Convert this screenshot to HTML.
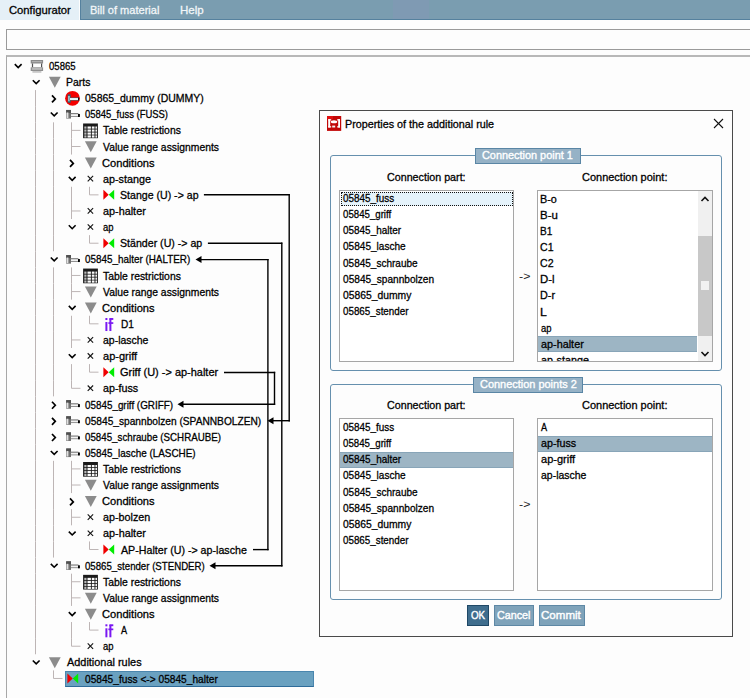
<!DOCTYPE html>
<html><head><meta charset="utf-8"><style>
html,body{margin:0;padding:0;width:750px;height:698px;overflow:hidden;background:#fdfdfd}
.t{position:absolute;white-space:pre;font-family:"Liberation Sans",sans-serif;font-size:11.5px;line-height:16px;transform-origin:0 0;-webkit-text-stroke-width:0.3px}
</style></head><body>
<div style="position:absolute;left:0;top:0;width:79px;height:20px;background:#e5f0f7"></div>
<div style="position:absolute;left:80px;top:0;width:670px;height:19px;background:#7a9db0;border-left:1px solid #55819e;border-bottom:1px solid #55819e"></div>
<div style="position:absolute;left:393px;top:0;width:36px;height:19px;background:#7f9ab3"></div>
<div class="t" style="left:8.52px;top:2px;color:#000;transform:scaleX(0.9774);">Configurator</div>
<div class="t" style="left:90.34px;top:2px;color:#f2f6f8;transform:scaleX(0.9606);">Bill of material</div>
<div class="t" style="left:180.00px;top:2px;color:#f2f6f8;transform:scaleX(1.0000);">Help</div>
<div style="position:absolute;left:6px;top:29px;width:760px;height:19px;border:1px solid #9a9a9a"></div>
<div style="position:absolute;left:6px;top:55px;width:760px;height:700px;border-left:1px solid #a8a8a8;border-top:2px solid #b8b8b8"></div>
<div class="t" style="left:49.40px;top:58px;color:#000;transform:scaleX(0.8313);">05865</div>
<div class="t" style="left:66.49px;top:74px;color:#000;transform:scaleX(0.9080);">Parts</div>
<div class="t" style="left:85.40px;top:90px;color:#000;transform:scaleX(0.9108);">05865_dummy (DUMMY)</div>
<div class="t" style="left:85.40px;top:106px;color:#000;transform:scaleX(0.8218);">05845_fuss (FUSS)</div>
<div class="t" style="left:103.40px;top:122px;color:#000;transform:scaleX(0.9023);">Table restrictions</div>
<div class="t" style="left:103.40px;top:139px;color:#000;transform:scaleX(0.8992);">Value range assignments</div>
<div class="t" style="left:102.43px;top:155px;color:#000;transform:scaleX(0.9679);">Conditions</div>
<div class="t" style="left:103.40px;top:171px;color:#000;transform:scaleX(0.9377);">ap-stange</div>
<div class="t" style="left:120.48px;top:187px;color:#000;transform:scaleX(0.9202);">Stange (U) -&gt; ap</div>
<div class="t" style="left:103.40px;top:203px;color:#000;transform:scaleX(0.9422);">ap-halter</div>
<div class="t" style="left:103.40px;top:219px;color:#000;transform:scaleX(0.8231);">ap</div>
<div class="t" style="left:120.48px;top:235px;color:#000;transform:scaleX(0.9227);">Ständer (U) -&gt; ap</div>
<div class="t" style="left:85.40px;top:251px;color:#000;transform:scaleX(0.8590);">05845_halter (HALTER)</div>
<div class="t" style="left:103.40px;top:268px;color:#000;transform:scaleX(0.9023);">Table restrictions</div>
<div class="t" style="left:103.40px;top:284px;color:#000;transform:scaleX(0.8992);">Value range assignments</div>
<div class="t" style="left:102.43px;top:300px;color:#000;transform:scaleX(0.9679);">Conditions</div>
<div class="t" style="left:120.52px;top:316px;color:#000;transform:scaleX(0.8769);">D1</div>
<div class="t" style="left:103.40px;top:332px;color:#000;transform:scaleX(0.9100);">ap-lasche</div>
<div class="t" style="left:103.40px;top:348px;color:#000;transform:scaleX(0.9583);">ap-griff</div>
<div class="t" style="left:120.45px;top:364px;color:#000;transform:scaleX(0.9529);">Griff (U) -&gt; ap-halter</div>
<div class="t" style="left:103.40px;top:380px;color:#000;transform:scaleX(0.9324);">ap-fuss</div>
<div class="t" style="left:85.40px;top:397px;color:#000;transform:scaleX(0.8569);">05845_griff (GRIFF)</div>
<div class="t" style="left:85.40px;top:413px;color:#000;transform:scaleX(0.8844);">05845_spannbolzen (SPANNBOLZEN)</div>
<div class="t" style="left:85.40px;top:429px;color:#000;transform:scaleX(0.8475);">05845_schraube (SCHRAUBE)</div>
<div class="t" style="left:85.40px;top:445px;color:#000;transform:scaleX(0.8609);">05845_lasche (LASCHE)</div>
<div class="t" style="left:103.40px;top:461px;color:#000;transform:scaleX(0.9023);">Table restrictions</div>
<div class="t" style="left:103.40px;top:477px;color:#000;transform:scaleX(0.8992);">Value range assignments</div>
<div class="t" style="left:102.43px;top:493px;color:#000;transform:scaleX(0.9679);">Conditions</div>
<div class="t" style="left:103.40px;top:509px;color:#000;transform:scaleX(0.9360);">ap-bolzen</div>
<div class="t" style="left:103.40px;top:525px;color:#000;transform:scaleX(0.9422);">ap-halter</div>
<div class="t" style="left:121.40px;top:542px;color:#000;transform:scaleX(0.9265);">AP-Halter (U) -&gt; ap-lasche</div>
<div class="t" style="left:85.40px;top:558px;color:#000;transform:scaleX(0.8401);">05865_stender (STENDER)</div>
<div class="t" style="left:103.40px;top:574px;color:#000;transform:scaleX(0.9023);">Table restrictions</div>
<div class="t" style="left:103.40px;top:590px;color:#000;transform:scaleX(0.8992);">Value range assignments</div>
<div class="t" style="left:102.43px;top:606px;color:#000;transform:scaleX(0.9679);">Conditions</div>
<div class="t" style="left:121.40px;top:622px;color:#000;transform:scaleX(0.7978);">A</div>
<div class="t" style="left:103.40px;top:638px;color:#000;transform:scaleX(0.8231);">ap</div>
<div class="t" style="left:67.40px;top:654px;color:#000;transform:scaleX(0.9487);">Additional rules</div>
<div style="position:absolute;left:65px;top:671px;width:247px;height:14px;background:#6aa1c0;border:1px solid #4a86ae;border-bottom-color:#2f6c9a"></div>
<div class="t" style="left:85.40px;top:671px;color:#000;transform:scaleX(0.8840);">05845_fuss &lt;-&gt; 05845_halter</div>
<svg style="position:absolute;left:0;top:0" width="750" height="698" viewBox="0 0 750 698"><line x1="35.5" y1="90.08" x2="35.5" y2="106.20" stroke="#bdb5b5" stroke-width="1"/><line x1="35.5" y1="106.20" x2="35.5" y2="122.32" stroke="#bdb5b5" stroke-width="1"/><line x1="35.5" y1="122.32" x2="35.5" y2="138.44" stroke="#bdb5b5" stroke-width="1"/><line x1="53.5" y1="122.32" x2="53.5" y2="138.44" stroke="#bdb5b5" stroke-width="1"/><line x1="71.5" y1="122.32" x2="71.5" y2="138.44" stroke="#bdb5b5" stroke-width="1"/><line x1="71.5" y1="130.38" x2="80.5" y2="130.38" stroke="#bdb5b5" stroke-width="1"/><line x1="35.5" y1="138.44" x2="35.5" y2="154.56" stroke="#bdb5b5" stroke-width="1"/><line x1="53.5" y1="138.44" x2="53.5" y2="154.56" stroke="#bdb5b5" stroke-width="1"/><line x1="71.5" y1="138.44" x2="71.5" y2="154.56" stroke="#bdb5b5" stroke-width="1"/><line x1="71.5" y1="146.50" x2="80.5" y2="146.50" stroke="#bdb5b5" stroke-width="1"/><line x1="35.5" y1="154.56" x2="35.5" y2="170.68" stroke="#bdb5b5" stroke-width="1"/><line x1="53.5" y1="154.56" x2="53.5" y2="170.68" stroke="#bdb5b5" stroke-width="1"/><line x1="35.5" y1="170.68" x2="35.5" y2="186.80" stroke="#bdb5b5" stroke-width="1"/><line x1="53.5" y1="170.68" x2="53.5" y2="186.80" stroke="#bdb5b5" stroke-width="1"/><line x1="35.5" y1="186.80" x2="35.5" y2="202.92" stroke="#bdb5b5" stroke-width="1"/><line x1="53.5" y1="186.80" x2="53.5" y2="202.92" stroke="#bdb5b5" stroke-width="1"/><line x1="71.5" y1="186.80" x2="71.5" y2="202.92" stroke="#bdb5b5" stroke-width="1"/><line x1="89.5" y1="186.80" x2="89.5" y2="194.86" stroke="#bdb5b5" stroke-width="1"/><line x1="89.5" y1="194.86" x2="98.5" y2="194.86" stroke="#bdb5b5" stroke-width="1"/><line x1="35.5" y1="202.92" x2="35.5" y2="219.04" stroke="#bdb5b5" stroke-width="1"/><line x1="53.5" y1="202.92" x2="53.5" y2="219.04" stroke="#bdb5b5" stroke-width="1"/><line x1="71.5" y1="202.92" x2="71.5" y2="219.04" stroke="#bdb5b5" stroke-width="1"/><line x1="71.5" y1="210.98" x2="80.5" y2="210.98" stroke="#bdb5b5" stroke-width="1"/><line x1="35.5" y1="219.04" x2="35.5" y2="235.16" stroke="#bdb5b5" stroke-width="1"/><line x1="53.5" y1="219.04" x2="53.5" y2="235.16" stroke="#bdb5b5" stroke-width="1"/><line x1="35.5" y1="235.16" x2="35.5" y2="251.28" stroke="#bdb5b5" stroke-width="1"/><line x1="53.5" y1="235.16" x2="53.5" y2="251.28" stroke="#bdb5b5" stroke-width="1"/><line x1="89.5" y1="235.16" x2="89.5" y2="243.22" stroke="#bdb5b5" stroke-width="1"/><line x1="89.5" y1="243.22" x2="98.5" y2="243.22" stroke="#bdb5b5" stroke-width="1"/><line x1="35.5" y1="251.28" x2="35.5" y2="267.40" stroke="#bdb5b5" stroke-width="1"/><line x1="35.5" y1="267.40" x2="35.5" y2="283.52" stroke="#bdb5b5" stroke-width="1"/><line x1="53.5" y1="267.40" x2="53.5" y2="283.52" stroke="#bdb5b5" stroke-width="1"/><line x1="71.5" y1="267.40" x2="71.5" y2="283.52" stroke="#bdb5b5" stroke-width="1"/><line x1="71.5" y1="275.46" x2="80.5" y2="275.46" stroke="#bdb5b5" stroke-width="1"/><line x1="35.5" y1="283.52" x2="35.5" y2="299.64" stroke="#bdb5b5" stroke-width="1"/><line x1="53.5" y1="283.52" x2="53.5" y2="299.64" stroke="#bdb5b5" stroke-width="1"/><line x1="71.5" y1="283.52" x2="71.5" y2="299.64" stroke="#bdb5b5" stroke-width="1"/><line x1="71.5" y1="291.58" x2="80.5" y2="291.58" stroke="#bdb5b5" stroke-width="1"/><line x1="35.5" y1="299.64" x2="35.5" y2="315.76" stroke="#bdb5b5" stroke-width="1"/><line x1="53.5" y1="299.64" x2="53.5" y2="315.76" stroke="#bdb5b5" stroke-width="1"/><line x1="35.5" y1="315.76" x2="35.5" y2="331.88" stroke="#bdb5b5" stroke-width="1"/><line x1="53.5" y1="315.76" x2="53.5" y2="331.88" stroke="#bdb5b5" stroke-width="1"/><line x1="71.5" y1="315.76" x2="71.5" y2="331.88" stroke="#bdb5b5" stroke-width="1"/><line x1="89.5" y1="315.76" x2="89.5" y2="323.82" stroke="#bdb5b5" stroke-width="1"/><line x1="89.5" y1="323.82" x2="98.5" y2="323.82" stroke="#bdb5b5" stroke-width="1"/><line x1="35.5" y1="331.88" x2="35.5" y2="348.00" stroke="#bdb5b5" stroke-width="1"/><line x1="53.5" y1="331.88" x2="53.5" y2="348.00" stroke="#bdb5b5" stroke-width="1"/><line x1="71.5" y1="331.88" x2="71.5" y2="348.00" stroke="#bdb5b5" stroke-width="1"/><line x1="71.5" y1="339.94" x2="80.5" y2="339.94" stroke="#bdb5b5" stroke-width="1"/><line x1="35.5" y1="348.00" x2="35.5" y2="364.12" stroke="#bdb5b5" stroke-width="1"/><line x1="53.5" y1="348.00" x2="53.5" y2="364.12" stroke="#bdb5b5" stroke-width="1"/><line x1="35.5" y1="364.12" x2="35.5" y2="380.24" stroke="#bdb5b5" stroke-width="1"/><line x1="53.5" y1="364.12" x2="53.5" y2="380.24" stroke="#bdb5b5" stroke-width="1"/><line x1="71.5" y1="364.12" x2="71.5" y2="380.24" stroke="#bdb5b5" stroke-width="1"/><line x1="89.5" y1="364.12" x2="89.5" y2="372.18" stroke="#bdb5b5" stroke-width="1"/><line x1="89.5" y1="372.18" x2="98.5" y2="372.18" stroke="#bdb5b5" stroke-width="1"/><line x1="35.5" y1="380.24" x2="35.5" y2="396.36" stroke="#bdb5b5" stroke-width="1"/><line x1="53.5" y1="380.24" x2="53.5" y2="396.36" stroke="#bdb5b5" stroke-width="1"/><line x1="71.5" y1="380.24" x2="71.5" y2="388.30" stroke="#bdb5b5" stroke-width="1"/><line x1="71.5" y1="388.30" x2="80.5" y2="388.30" stroke="#bdb5b5" stroke-width="1"/><line x1="35.5" y1="396.36" x2="35.5" y2="412.48" stroke="#bdb5b5" stroke-width="1"/><line x1="35.5" y1="412.48" x2="35.5" y2="428.60" stroke="#bdb5b5" stroke-width="1"/><line x1="35.5" y1="428.60" x2="35.5" y2="444.72" stroke="#bdb5b5" stroke-width="1"/><line x1="35.5" y1="444.72" x2="35.5" y2="460.84" stroke="#bdb5b5" stroke-width="1"/><line x1="35.5" y1="460.84" x2="35.5" y2="476.96" stroke="#bdb5b5" stroke-width="1"/><line x1="53.5" y1="460.84" x2="53.5" y2="476.96" stroke="#bdb5b5" stroke-width="1"/><line x1="71.5" y1="460.84" x2="71.5" y2="476.96" stroke="#bdb5b5" stroke-width="1"/><line x1="71.5" y1="468.90" x2="80.5" y2="468.90" stroke="#bdb5b5" stroke-width="1"/><line x1="35.5" y1="476.96" x2="35.5" y2="493.08" stroke="#bdb5b5" stroke-width="1"/><line x1="53.5" y1="476.96" x2="53.5" y2="493.08" stroke="#bdb5b5" stroke-width="1"/><line x1="71.5" y1="476.96" x2="71.5" y2="493.08" stroke="#bdb5b5" stroke-width="1"/><line x1="71.5" y1="485.02" x2="80.5" y2="485.02" stroke="#bdb5b5" stroke-width="1"/><line x1="35.5" y1="493.08" x2="35.5" y2="509.20" stroke="#bdb5b5" stroke-width="1"/><line x1="53.5" y1="493.08" x2="53.5" y2="509.20" stroke="#bdb5b5" stroke-width="1"/><line x1="35.5" y1="509.20" x2="35.5" y2="525.32" stroke="#bdb5b5" stroke-width="1"/><line x1="53.5" y1="509.20" x2="53.5" y2="525.32" stroke="#bdb5b5" stroke-width="1"/><line x1="71.5" y1="509.20" x2="71.5" y2="525.32" stroke="#bdb5b5" stroke-width="1"/><line x1="71.5" y1="517.26" x2="80.5" y2="517.26" stroke="#bdb5b5" stroke-width="1"/><line x1="35.5" y1="525.32" x2="35.5" y2="541.44" stroke="#bdb5b5" stroke-width="1"/><line x1="53.5" y1="525.32" x2="53.5" y2="541.44" stroke="#bdb5b5" stroke-width="1"/><line x1="35.5" y1="541.44" x2="35.5" y2="557.56" stroke="#bdb5b5" stroke-width="1"/><line x1="53.5" y1="541.44" x2="53.5" y2="557.56" stroke="#bdb5b5" stroke-width="1"/><line x1="89.5" y1="541.44" x2="89.5" y2="549.50" stroke="#bdb5b5" stroke-width="1"/><line x1="89.5" y1="549.50" x2="98.5" y2="549.50" stroke="#bdb5b5" stroke-width="1"/><line x1="35.5" y1="557.56" x2="35.5" y2="573.68" stroke="#bdb5b5" stroke-width="1"/><line x1="35.5" y1="573.68" x2="35.5" y2="589.80" stroke="#bdb5b5" stroke-width="1"/><line x1="71.5" y1="573.68" x2="71.5" y2="589.80" stroke="#bdb5b5" stroke-width="1"/><line x1="71.5" y1="581.74" x2="80.5" y2="581.74" stroke="#bdb5b5" stroke-width="1"/><line x1="35.5" y1="589.80" x2="35.5" y2="605.92" stroke="#bdb5b5" stroke-width="1"/><line x1="71.5" y1="589.80" x2="71.5" y2="605.92" stroke="#bdb5b5" stroke-width="1"/><line x1="71.5" y1="597.86" x2="80.5" y2="597.86" stroke="#bdb5b5" stroke-width="1"/><line x1="35.5" y1="605.92" x2="35.5" y2="622.04" stroke="#bdb5b5" stroke-width="1"/><line x1="35.5" y1="622.04" x2="35.5" y2="638.16" stroke="#bdb5b5" stroke-width="1"/><line x1="71.5" y1="622.04" x2="71.5" y2="638.16" stroke="#bdb5b5" stroke-width="1"/><line x1="89.5" y1="622.04" x2="89.5" y2="630.10" stroke="#bdb5b5" stroke-width="1"/><line x1="89.5" y1="630.10" x2="98.5" y2="630.10" stroke="#bdb5b5" stroke-width="1"/><line x1="35.5" y1="638.16" x2="35.5" y2="654.28" stroke="#bdb5b5" stroke-width="1"/><line x1="71.5" y1="638.16" x2="71.5" y2="646.22" stroke="#bdb5b5" stroke-width="1"/><line x1="71.5" y1="646.22" x2="80.5" y2="646.22" stroke="#bdb5b5" stroke-width="1"/><line x1="53.5" y1="670.40" x2="53.5" y2="678.46" stroke="#bdb5b5" stroke-width="1"/><line x1="53.5" y1="678.46" x2="62.5" y2="678.46" stroke="#bdb5b5" stroke-width="1"/><polyline points="14.80,64.10 18.20,67.50 21.60,64.10" fill="none" stroke="#000" stroke-width="1.6"/><polyline points="32.80,80.22 36.20,83.62 39.60,80.22" fill="none" stroke="#000" stroke-width="1.6"/><polyline points="52.00,95.44 55.30,98.94 52.00,102.44" fill="none" stroke="#000" stroke-width="1.7"/><polyline points="50.80,112.46 54.20,115.86 57.60,112.46" fill="none" stroke="#000" stroke-width="1.6"/><polyline points="70.00,159.92 73.30,163.42 70.00,166.92" fill="none" stroke="#000" stroke-width="1.7"/><polyline points="68.80,176.94 72.20,180.34 75.60,176.94" fill="none" stroke="#000" stroke-width="1.6"/><polyline points="68.80,225.30 72.20,228.70 75.60,225.30" fill="none" stroke="#000" stroke-width="1.6"/><polyline points="50.80,257.54 54.20,260.94 57.60,257.54" fill="none" stroke="#000" stroke-width="1.6"/><polyline points="68.80,305.90 72.20,309.30 75.60,305.90" fill="none" stroke="#000" stroke-width="1.6"/><polyline points="68.80,354.26 72.20,357.66 75.60,354.26" fill="none" stroke="#000" stroke-width="1.6"/><polyline points="52.00,401.72 55.30,405.22 52.00,408.72" fill="none" stroke="#000" stroke-width="1.7"/><polyline points="52.00,417.84 55.30,421.34 52.00,424.84" fill="none" stroke="#000" stroke-width="1.7"/><polyline points="52.00,433.96 55.30,437.46 52.00,440.96" fill="none" stroke="#000" stroke-width="1.7"/><polyline points="50.80,450.98 54.20,454.38 57.60,450.98" fill="none" stroke="#000" stroke-width="1.6"/><polyline points="70.00,498.44 73.30,501.94 70.00,505.44" fill="none" stroke="#000" stroke-width="1.7"/><polyline points="68.80,531.58 72.20,534.98 75.60,531.58" fill="none" stroke="#000" stroke-width="1.6"/><polyline points="50.80,563.82 54.20,567.22 57.60,563.82" fill="none" stroke="#000" stroke-width="1.6"/><polyline points="68.80,612.18 72.20,615.58 75.60,612.18" fill="none" stroke="#000" stroke-width="1.6"/><polyline points="32.80,660.54 36.20,663.94 39.60,660.54" fill="none" stroke="#000" stroke-width="1.6"/><g transform="translate(30.4,60.00)"><rect x="0.3" y="0" width="12.4" height="3.5" fill="#8a8a8a"/><rect x="1.5" y="1" width="10" height="1.2" fill="#b0b0b0"/><rect x="1.5" y="3.5" width="1.2" height="3.8" fill="#505050"/><rect x="10.6" y="3.5" width="1.2" height="3.8" fill="#505050"/><rect x="0.3" y="7.3" width="12.4" height="3.7" fill="#8f8f8f"/><rect x="1.5" y="8.2" width="10" height="1.5" fill="#c4c4c4"/><rect x="2" y="11" width="9" height="1.8" fill="#c8c8c8"/></g><polygon points="48.9,76.82 60.7,76.82 54.8,87.82" fill="#8c8c8c"/><circle cx="72.50" cy="98.34" r="7.4" fill="#f40000"/><rect x="67.7" y="94.44" width="3" height="8.3" fill="#2c6272"/><rect x="68.30000000000001" y="95.94" width="1.3" height="5.4" fill="#bfe8f0"/><rect x="69.80000000000001" y="97.44" width="9.2" height="3.2" fill="#505a60"/><rect x="70.0" y="98.04" width="8.8" height="2" fill="#e4f6fa"/><rect x="78.0" y="97.54" width="1.2" height="3" fill="#111"/><rect x="66.20" y="109.96" width="4.8" height="8.6" fill="#707070"/><rect x="66.20" y="109.96" width="4.8" height="3" fill="#505050"/><rect x="66.60" y="112.46" width="1.8" height="5.6" fill="#e0e0e0"/><rect x="71.00" y="113.16" width="7.4" height="3.6" fill="#6a6a6a"/><rect x="71.00" y="114.16" width="7" height="1.9" fill="#f2f2f2"/><rect x="78.00" y="113.96" width="1.9" height="3" fill="#000"/><g transform="translate(83.10,123.48)"><rect x="0" y="0" width="14.8" height="14.7" fill="#1a1a1a"/><rect x="1.2" y="3.0" width="2.2" height="2.2" fill="#b8b8b8"/><rect x="4.4" y="3.0" width="3.4" height="2.2" fill="#fafafa"/><rect x="8.7" y="3.0" width="2.7" height="2.2" fill="#fafafa"/><rect x="12.3" y="3.0" width="1.6" height="2.2" fill="#f0f0f0"/><rect x="1.2" y="6.0" width="2.2" height="2.2" fill="#b8b8b8"/><rect x="4.4" y="6.0" width="3.4" height="2.2" fill="#fafafa"/><rect x="8.7" y="6.0" width="2.7" height="2.2" fill="#fafafa"/><rect x="12.3" y="6.0" width="1.6" height="2.2" fill="#f0f0f0"/><rect x="1.2" y="9.0" width="2.2" height="2.2" fill="#b8b8b8"/><rect x="4.4" y="9.0" width="3.4" height="2.2" fill="#fafafa"/><rect x="8.7" y="9.0" width="2.7" height="2.2" fill="#fafafa"/><rect x="12.3" y="9.0" width="1.6" height="2.2" fill="#f0f0f0"/><rect x="1.2" y="11.9" width="2.2" height="2.2" fill="#b8b8b8"/><rect x="4.4" y="11.9" width="3.4" height="2.2" fill="#fafafa"/><rect x="8.7" y="11.9" width="2.7" height="2.2" fill="#fafafa"/><rect x="12.3" y="11.9" width="1.6" height="2.2" fill="#f0f0f0"/></g><polygon points="84.9,141.30 96.7,141.30 90.80000000000001,152.30" fill="#8c8c8c"/><polygon points="84.9,157.42 96.7,157.42 90.80000000000001,168.42" fill="#8c8c8c"/><line x1="87.70" y1="175.94" x2="93.10" y2="181.34" stroke="#111" stroke-width="1.1"/><line x1="87.70" y1="181.34" x2="93.10" y2="175.94" stroke="#111" stroke-width="1.1"/><polygon points="103.4,189.86 108.7,194.86 103.4,199.86" fill="#f00000"/><polygon points="114.2,189.86 108.7,194.86 114.2,199.86" fill="#00ec00"/><line x1="87.70" y1="208.18" x2="93.10" y2="213.58" stroke="#111" stroke-width="1.1"/><line x1="87.70" y1="213.58" x2="93.10" y2="208.18" stroke="#111" stroke-width="1.1"/><line x1="87.70" y1="224.30" x2="93.10" y2="229.70" stroke="#111" stroke-width="1.1"/><line x1="87.70" y1="229.70" x2="93.10" y2="224.30" stroke="#111" stroke-width="1.1"/><polygon points="103.4,238.22 108.7,243.22 103.4,248.22" fill="#f00000"/><polygon points="114.2,238.22 108.7,243.22 114.2,248.22" fill="#00ec00"/><rect x="66.20" y="255.04" width="4.8" height="8.6" fill="#707070"/><rect x="66.20" y="255.04" width="4.8" height="3" fill="#505050"/><rect x="66.60" y="257.54" width="1.8" height="5.6" fill="#e0e0e0"/><rect x="71.00" y="258.24" width="7.4" height="3.6" fill="#6a6a6a"/><rect x="71.00" y="259.24" width="7" height="1.9" fill="#f2f2f2"/><rect x="78.00" y="259.04" width="1.9" height="3" fill="#000"/><g transform="translate(83.10,268.56)"><rect x="0" y="0" width="14.8" height="14.7" fill="#1a1a1a"/><rect x="1.2" y="3.0" width="2.2" height="2.2" fill="#b8b8b8"/><rect x="4.4" y="3.0" width="3.4" height="2.2" fill="#fafafa"/><rect x="8.7" y="3.0" width="2.7" height="2.2" fill="#fafafa"/><rect x="12.3" y="3.0" width="1.6" height="2.2" fill="#f0f0f0"/><rect x="1.2" y="6.0" width="2.2" height="2.2" fill="#b8b8b8"/><rect x="4.4" y="6.0" width="3.4" height="2.2" fill="#fafafa"/><rect x="8.7" y="6.0" width="2.7" height="2.2" fill="#fafafa"/><rect x="12.3" y="6.0" width="1.6" height="2.2" fill="#f0f0f0"/><rect x="1.2" y="9.0" width="2.2" height="2.2" fill="#b8b8b8"/><rect x="4.4" y="9.0" width="3.4" height="2.2" fill="#fafafa"/><rect x="8.7" y="9.0" width="2.7" height="2.2" fill="#fafafa"/><rect x="12.3" y="9.0" width="1.6" height="2.2" fill="#f0f0f0"/><rect x="1.2" y="11.9" width="2.2" height="2.2" fill="#b8b8b8"/><rect x="4.4" y="11.9" width="3.4" height="2.2" fill="#fafafa"/><rect x="8.7" y="11.9" width="2.7" height="2.2" fill="#fafafa"/><rect x="12.3" y="11.9" width="1.6" height="2.2" fill="#f0f0f0"/></g><polygon points="84.9,286.38 96.7,286.38 90.80000000000001,297.38" fill="#8c8c8c"/><polygon points="84.9,302.50 96.7,302.50 90.80000000000001,313.50" fill="#8c8c8c"/><g transform="translate(105.40,323.82)"><rect x="0" y="-5.8" width="2" height="2" fill="#7a18f2"/><rect x="0" y="-1.8" width="2" height="9" fill="#7a18f2"/><rect x="4" y="-5.3" width="2" height="12.5" fill="#7a18f2"/><rect x="4" y="-5.8" width="3.9" height="1.9" fill="#7a18f2"/><rect x="3" y="-1.6" width="4.9" height="1.7" fill="#7a18f2"/></g><line x1="87.70" y1="337.14" x2="93.10" y2="342.54" stroke="#111" stroke-width="1.1"/><line x1="87.70" y1="342.54" x2="93.10" y2="337.14" stroke="#111" stroke-width="1.1"/><line x1="87.70" y1="353.26" x2="93.10" y2="358.66" stroke="#111" stroke-width="1.1"/><line x1="87.70" y1="358.66" x2="93.10" y2="353.26" stroke="#111" stroke-width="1.1"/><polygon points="103.4,367.18 108.7,372.18 103.4,377.18" fill="#f00000"/><polygon points="114.2,367.18 108.7,372.18 114.2,377.18" fill="#00ec00"/><line x1="87.70" y1="385.50" x2="93.10" y2="390.90" stroke="#111" stroke-width="1.1"/><line x1="87.70" y1="390.90" x2="93.10" y2="385.50" stroke="#111" stroke-width="1.1"/><rect x="66.20" y="400.12" width="4.8" height="8.6" fill="#707070"/><rect x="66.20" y="400.12" width="4.8" height="3" fill="#505050"/><rect x="66.60" y="402.62" width="1.8" height="5.6" fill="#e0e0e0"/><rect x="71.00" y="403.32" width="7.4" height="3.6" fill="#6a6a6a"/><rect x="71.00" y="404.32" width="7" height="1.9" fill="#f2f2f2"/><rect x="78.00" y="404.12" width="1.9" height="3" fill="#000"/><rect x="66.20" y="416.24" width="4.8" height="8.6" fill="#707070"/><rect x="66.20" y="416.24" width="4.8" height="3" fill="#505050"/><rect x="66.60" y="418.74" width="1.8" height="5.6" fill="#e0e0e0"/><rect x="71.00" y="419.44" width="7.4" height="3.6" fill="#6a6a6a"/><rect x="71.00" y="420.44" width="7" height="1.9" fill="#f2f2f2"/><rect x="78.00" y="420.24" width="1.9" height="3" fill="#000"/><rect x="66.20" y="432.36" width="4.8" height="8.6" fill="#707070"/><rect x="66.20" y="432.36" width="4.8" height="3" fill="#505050"/><rect x="66.60" y="434.86" width="1.8" height="5.6" fill="#e0e0e0"/><rect x="71.00" y="435.56" width="7.4" height="3.6" fill="#6a6a6a"/><rect x="71.00" y="436.56" width="7" height="1.9" fill="#f2f2f2"/><rect x="78.00" y="436.36" width="1.9" height="3" fill="#000"/><rect x="66.20" y="448.48" width="4.8" height="8.6" fill="#707070"/><rect x="66.20" y="448.48" width="4.8" height="3" fill="#505050"/><rect x="66.60" y="450.98" width="1.8" height="5.6" fill="#e0e0e0"/><rect x="71.00" y="451.68" width="7.4" height="3.6" fill="#6a6a6a"/><rect x="71.00" y="452.68" width="7" height="1.9" fill="#f2f2f2"/><rect x="78.00" y="452.48" width="1.9" height="3" fill="#000"/><g transform="translate(83.10,462.00)"><rect x="0" y="0" width="14.8" height="14.7" fill="#1a1a1a"/><rect x="1.2" y="3.0" width="2.2" height="2.2" fill="#b8b8b8"/><rect x="4.4" y="3.0" width="3.4" height="2.2" fill="#fafafa"/><rect x="8.7" y="3.0" width="2.7" height="2.2" fill="#fafafa"/><rect x="12.3" y="3.0" width="1.6" height="2.2" fill="#f0f0f0"/><rect x="1.2" y="6.0" width="2.2" height="2.2" fill="#b8b8b8"/><rect x="4.4" y="6.0" width="3.4" height="2.2" fill="#fafafa"/><rect x="8.7" y="6.0" width="2.7" height="2.2" fill="#fafafa"/><rect x="12.3" y="6.0" width="1.6" height="2.2" fill="#f0f0f0"/><rect x="1.2" y="9.0" width="2.2" height="2.2" fill="#b8b8b8"/><rect x="4.4" y="9.0" width="3.4" height="2.2" fill="#fafafa"/><rect x="8.7" y="9.0" width="2.7" height="2.2" fill="#fafafa"/><rect x="12.3" y="9.0" width="1.6" height="2.2" fill="#f0f0f0"/><rect x="1.2" y="11.9" width="2.2" height="2.2" fill="#b8b8b8"/><rect x="4.4" y="11.9" width="3.4" height="2.2" fill="#fafafa"/><rect x="8.7" y="11.9" width="2.7" height="2.2" fill="#fafafa"/><rect x="12.3" y="11.9" width="1.6" height="2.2" fill="#f0f0f0"/></g><polygon points="84.9,479.82 96.7,479.82 90.80000000000001,490.82" fill="#8c8c8c"/><polygon points="84.9,495.94 96.7,495.94 90.80000000000001,506.94" fill="#8c8c8c"/><line x1="87.70" y1="514.46" x2="93.10" y2="519.86" stroke="#111" stroke-width="1.1"/><line x1="87.70" y1="519.86" x2="93.10" y2="514.46" stroke="#111" stroke-width="1.1"/><line x1="87.70" y1="530.58" x2="93.10" y2="535.98" stroke="#111" stroke-width="1.1"/><line x1="87.70" y1="535.98" x2="93.10" y2="530.58" stroke="#111" stroke-width="1.1"/><polygon points="103.4,544.50 108.7,549.50 103.4,554.50" fill="#f00000"/><polygon points="114.2,544.50 108.7,549.50 114.2,554.50" fill="#00ec00"/><rect x="66.20" y="561.32" width="4.8" height="8.6" fill="#707070"/><rect x="66.20" y="561.32" width="4.8" height="3" fill="#505050"/><rect x="66.60" y="563.82" width="1.8" height="5.6" fill="#e0e0e0"/><rect x="71.00" y="564.52" width="7.4" height="3.6" fill="#6a6a6a"/><rect x="71.00" y="565.52" width="7" height="1.9" fill="#f2f2f2"/><rect x="78.00" y="565.32" width="1.9" height="3" fill="#000"/><g transform="translate(83.10,574.84)"><rect x="0" y="0" width="14.8" height="14.7" fill="#1a1a1a"/><rect x="1.2" y="3.0" width="2.2" height="2.2" fill="#b8b8b8"/><rect x="4.4" y="3.0" width="3.4" height="2.2" fill="#fafafa"/><rect x="8.7" y="3.0" width="2.7" height="2.2" fill="#fafafa"/><rect x="12.3" y="3.0" width="1.6" height="2.2" fill="#f0f0f0"/><rect x="1.2" y="6.0" width="2.2" height="2.2" fill="#b8b8b8"/><rect x="4.4" y="6.0" width="3.4" height="2.2" fill="#fafafa"/><rect x="8.7" y="6.0" width="2.7" height="2.2" fill="#fafafa"/><rect x="12.3" y="6.0" width="1.6" height="2.2" fill="#f0f0f0"/><rect x="1.2" y="9.0" width="2.2" height="2.2" fill="#b8b8b8"/><rect x="4.4" y="9.0" width="3.4" height="2.2" fill="#fafafa"/><rect x="8.7" y="9.0" width="2.7" height="2.2" fill="#fafafa"/><rect x="12.3" y="9.0" width="1.6" height="2.2" fill="#f0f0f0"/><rect x="1.2" y="11.9" width="2.2" height="2.2" fill="#b8b8b8"/><rect x="4.4" y="11.9" width="3.4" height="2.2" fill="#fafafa"/><rect x="8.7" y="11.9" width="2.7" height="2.2" fill="#fafafa"/><rect x="12.3" y="11.9" width="1.6" height="2.2" fill="#f0f0f0"/></g><polygon points="84.9,592.66 96.7,592.66 90.80000000000001,603.66" fill="#8c8c8c"/><polygon points="84.9,608.78 96.7,608.78 90.80000000000001,619.78" fill="#8c8c8c"/><g transform="translate(105.40,630.10)"><rect x="0" y="-5.8" width="2" height="2" fill="#7a18f2"/><rect x="0" y="-1.8" width="2" height="9" fill="#7a18f2"/><rect x="4" y="-5.3" width="2" height="12.5" fill="#7a18f2"/><rect x="4" y="-5.8" width="3.9" height="1.9" fill="#7a18f2"/><rect x="3" y="-1.6" width="4.9" height="1.7" fill="#7a18f2"/></g><line x1="87.70" y1="643.42" x2="93.10" y2="648.82" stroke="#111" stroke-width="1.1"/><line x1="87.70" y1="648.82" x2="93.10" y2="643.42" stroke="#111" stroke-width="1.1"/><polygon points="48.9,657.14 60.7,657.14 54.8,668.14" fill="#8c8c8c"/><polygon points="67.4,673.46 72.7,678.46 67.4,683.46" fill="#f00000"/><polygon points="78.2,673.46 72.7,678.46 78.2,683.46" fill="#00ec00"/><line x1="203.9" y1="194.7" x2="289.7" y2="194.7" stroke="#000" stroke-width="1.4"/><line x1="289.2" y1="194" x2="289.2" y2="421.4" stroke="#000" stroke-width="1.4"/><line x1="272" y1="420.7" x2="289.9" y2="420.7" stroke="#000" stroke-width="1.4"/><polygon points="267.5,420.7 273.5,417.2 273.5,424.2" fill="#000"/><line x1="207.9" y1="243.3" x2="282.3" y2="243.3" stroke="#000" stroke-width="1.4"/><line x1="281.8" y1="242.6" x2="281.8" y2="566.4" stroke="#000" stroke-width="1.4"/><line x1="214" y1="565.7" x2="282.5" y2="565.7" stroke="#000" stroke-width="1.4"/><polygon points="209.5,565.7 215.5,562.2 215.5,569.2" fill="#000"/><line x1="253" y1="549.6" x2="268.6" y2="549.6" stroke="#000" stroke-width="1.4"/><line x1="267.9" y1="259" x2="267.9" y2="550.3" stroke="#000" stroke-width="1.4"/><line x1="200" y1="259.6" x2="268.6" y2="259.6" stroke="#000" stroke-width="1.4"/><polygon points="195.5,259.6 201.5,256.1 201.5,263.1" fill="#000"/><line x1="224" y1="372.5" x2="275.2" y2="372.5" stroke="#000" stroke-width="1.4"/><line x1="274.5" y1="371.8" x2="274.5" y2="404.9" stroke="#000" stroke-width="1.4"/><line x1="182" y1="404.2" x2="275.2" y2="404.2" stroke="#000" stroke-width="1.4"/><polygon points="177.5,404.2 183.5,400.7 183.5,407.7" fill="#000"/></svg>
<div style="position:absolute;left:319px;top:110px;width:412px;height:525px;border:1px solid #4a4a4a;background:#fdfdfd"></div>
<svg style="position:absolute;left:327px;top:116px" width="15" height="15" viewBox="0 0 15 15"><rect x="0" y="0" width="14.2" height="14.9" fill="#c20808"/><rect x="0" y="0" width="6" height="3" fill="#e01010"/><rect x="1.2" y="3.2" width="2" height="8.3" fill="#fff"/><rect x="1.2" y="3.2" width="3" height="1.3" fill="#fff"/><rect x="1.2" y="10.2" width="3" height="1.3" fill="#fff"/><rect x="11.2" y="3.2" width="1.8" height="8.3" fill="#fff"/><rect x="10.2" y="3.2" width="2.8" height="1.3" fill="#fff"/><rect x="10.2" y="10.2" width="2.8" height="1.3" fill="#fff"/><ellipse cx="7" cy="5.8" rx="3.2" ry="1.5" fill="#fff"/><rect x="5.2" y="9.6" width="3" height="1.9" fill="#f4f4f4"/></svg>
<div class="t" style="left:345.06px;top:116px;color:#000;transform:scaleX(0.9367);">Properties of the additional rule</div>
<svg style="position:absolute;left:712px;top:117px" width="13" height="13" viewBox="0 0 13 13"><line x1="2" y1="2" x2="11" y2="11" stroke="#111" stroke-width="1.1"/><line x1="2" y1="11" x2="11" y2="2" stroke="#111" stroke-width="1.1"/></svg>
<div style="position:absolute;left:330px;top:155px;width:390px;height:214px;border:1px solid #6690ae;border-radius:3px"></div>
<div style="position:absolute;left:475px;top:148px;width:104px;height:14px;background:#96b2c6;border:1px solid #5a86a5"></div>
<div class="t" style="left:481.85px;top:147px;color:#ffffff;transform:scaleX(0.9468);-webkit-text-stroke-width:0.35px">Connection point 1</div>
<div style="position:absolute;left:330px;top:384px;width:390px;height:214px;border:1px solid #6690ae;border-radius:3px"></div>
<div style="position:absolute;left:473px;top:376.5px;width:108px;height:14px;background:#96b2c6;border:1px solid #5a86a5"></div>
<div class="t" style="left:479.85px;top:376px;color:#ffffff;transform:scaleX(0.9520);-webkit-text-stroke-width:0.35px">Connection points 2</div>
<div class="t" style="left:386.77px;top:169px;color:#000;transform:scaleX(0.9313);">Connection part:</div>
<div class="t" style="left:582.05px;top:169px;color:#000;transform:scaleX(0.9545);">Connection point:</div>
<div style="position:absolute;left:339px;top:190px;width:173px;height:170px;border:1px solid #a6a6a6;background:#fff"></div>
<div style="position:absolute;left:537px;top:190px;width:174px;height:170px;border:1px solid #a6a6a6;background:#fff"></div>
<div class="t" style="left:518.92px;top:268px;color:#222;transform:scaleX(1.0778);-webkit-text-stroke-width:0">-&gt;</div>
<div class="t" style="left:386.77px;top:397px;color:#000;transform:scaleX(0.9313);">Connection part:</div>
<div class="t" style="left:582.05px;top:397px;color:#000;transform:scaleX(0.9545);">Connection point:</div>
<div style="position:absolute;left:339px;top:418px;width:173px;height:171px;border:1px solid #a6a6a6;background:#fff"></div>
<div style="position:absolute;left:537px;top:418px;width:174px;height:171px;border:1px solid #a6a6a6;background:#fff"></div>
<div class="t" style="left:518.92px;top:496px;color:#222;transform:scaleX(1.0778);-webkit-text-stroke-width:0">-&gt;</div>
<div style="position:absolute;left:341px;top:192px;width:170px;height:12px;background:#e5f3fb;border:1px dotted #111"></div>
<div class="t" style="left:342.70px;top:190px;color:#000;transform:scaleX(0.8602);">05845_fuss</div>
<div class="t" style="left:342.70px;top:206px;color:#000;transform:scaleX(0.8406);">05845_griff</div>
<div class="t" style="left:342.70px;top:222px;color:#000;transform:scaleX(0.8647);">05845_halter</div>
<div class="t" style="left:342.70px;top:238px;color:#000;transform:scaleX(0.8748);">05845_lasche</div>
<div class="t" style="left:342.70px;top:255px;color:#000;transform:scaleX(0.8706);">05845_schraube</div>
<div class="t" style="left:342.70px;top:271px;color:#000;transform:scaleX(0.8796);">05845_spannbolzen</div>
<div class="t" style="left:342.70px;top:287px;color:#000;transform:scaleX(0.8987);">05865_dummy</div>
<div class="t" style="left:342.70px;top:303px;color:#000;transform:scaleX(0.8532);">05865_stender</div>
<div style="position:absolute;left:0;top:0;width:750px;height:698px;clip-path:inset(191px 38px 337px 538px)">
<div style="position:absolute;left:538px;top:336px;width:159px;height:16px;background:#9db5c4;box-shadow:inset 0 1px #88a5b8, inset 0 -1px #88a5b8"></div>
<div class="t" style="left:540.06px;top:191px;color:#000;transform:scaleX(0.9387);">B-o</div>
<div class="t" style="left:540.00px;top:207px;color:#000;transform:scaleX(0.9973);">B-u</div>
<div class="t" style="left:540.12px;top:223px;color:#000;transform:scaleX(0.8771);">B1</div>
<div class="t" style="left:540.08px;top:239px;color:#000;transform:scaleX(0.9183);">C1</div>
<div class="t" style="left:540.08px;top:255px;color:#000;transform:scaleX(0.9183);">C2</div>
<div class="t" style="left:540.01px;top:271px;color:#000;transform:scaleX(0.9921);">D-l</div>
<div class="t" style="left:540.06px;top:287px;color:#000;transform:scaleX(0.9397);">D-r</div>
<div class="t" style="left:539.94px;top:304px;color:#000;transform:scaleX(1.0646);">L</div>
<div class="t" style="left:541.00px;top:320px;color:#000;transform:scaleX(0.8231);">ap</div>
<div class="t" style="left:541.00px;top:336px;color:#000;transform:scaleX(0.9422);">ap-halter</div>
<div class="t" style="left:541.00px;top:352px;color:#000;transform:scaleX(0.9377);">ap-stange</div>
</div>
<div style="position:absolute;left:698px;top:191px;width:14px;height:170px;background:#f0f0f0"></div>
<div style="position:absolute;left:698px;top:236px;width:14px;height:100px;background:#c8c8c8"></div>
<div style="position:absolute;left:701px;top:281px;width:8px;height:9px;background:#f2f2f2"></div>
<svg style="position:absolute;left:698px;top:191px" width="14" height="170" viewBox="0 0 14 170"><polyline points="3.5,10 7,6.5 10.5,10" fill="none" stroke="#111" stroke-width="1.6"/><polyline points="3.5,161 7,164.5 10.5,161" fill="none" stroke="#111" stroke-width="1.6"/></svg>
<div style="position:absolute;left:340px;top:452px;width:173px;height:16px;background:#9db5c4;box-shadow:inset 0 1px #88a5b8, inset 0 -1px #88a5b8"></div>
<div class="t" style="left:342.70px;top:419px;color:#000;transform:scaleX(0.8602);">05845_fuss</div>
<div class="t" style="left:342.70px;top:435px;color:#000;transform:scaleX(0.8406);">05845_griff</div>
<div class="t" style="left:342.70px;top:451px;color:#000;transform:scaleX(0.8647);">05845_halter</div>
<div class="t" style="left:342.70px;top:467px;color:#000;transform:scaleX(0.8748);">05845_lasche</div>
<div class="t" style="left:342.70px;top:484px;color:#000;transform:scaleX(0.8706);">05845_schraube</div>
<div class="t" style="left:342.70px;top:500px;color:#000;transform:scaleX(0.8796);">05845_spannbolzen</div>
<div class="t" style="left:342.70px;top:516px;color:#000;transform:scaleX(0.8987);">05865_dummy</div>
<div class="t" style="left:342.70px;top:532px;color:#000;transform:scaleX(0.8532);">05865_stender</div>
<div style="position:absolute;left:538px;top:436px;width:174px;height:16px;background:#9db5c4;box-shadow:inset 0 1px #88a5b8, inset 0 -1px #88a5b8"></div>
<div class="t" style="left:541.00px;top:419px;color:#000;transform:scaleX(0.7978);">A</div>
<div class="t" style="left:541.00px;top:435px;color:#000;transform:scaleX(0.9324);">ap-fuss</div>
<div class="t" style="left:541.00px;top:451px;color:#000;transform:scaleX(0.9583);">ap-griff</div>
<div class="t" style="left:541.00px;top:467px;color:#000;transform:scaleX(0.9100);">ap-lasche</div>
<div style="position:absolute;left:467px;top:605px;width:20px;height:19px;background:#3f6d8d;border:1px solid #1f4866"></div>
<div class="t" style="left:470.90px;top:607px;color:#ffffff;transform:scaleX(0.8500);-webkit-text-stroke-width:0.4px">OK</div>
<div style="position:absolute;left:494px;top:605px;width:38px;height:19px;background:#7fa3ba;border:1px solid #5e88a5"></div>
<div class="t" style="left:496.67px;top:607px;color:#ffffff;transform:scaleX(0.9324);-webkit-text-stroke-width:0.4px">Cancel</div>
<div style="position:absolute;left:539px;top:605px;width:44px;height:19px;background:#7fa3ba;border:1px solid #5e88a5"></div>
<div class="t" style="left:541.39px;top:607px;color:#ffffff;transform:scaleX(1.0051);-webkit-text-stroke-width:0.4px">Commit</div>
</body></html>
